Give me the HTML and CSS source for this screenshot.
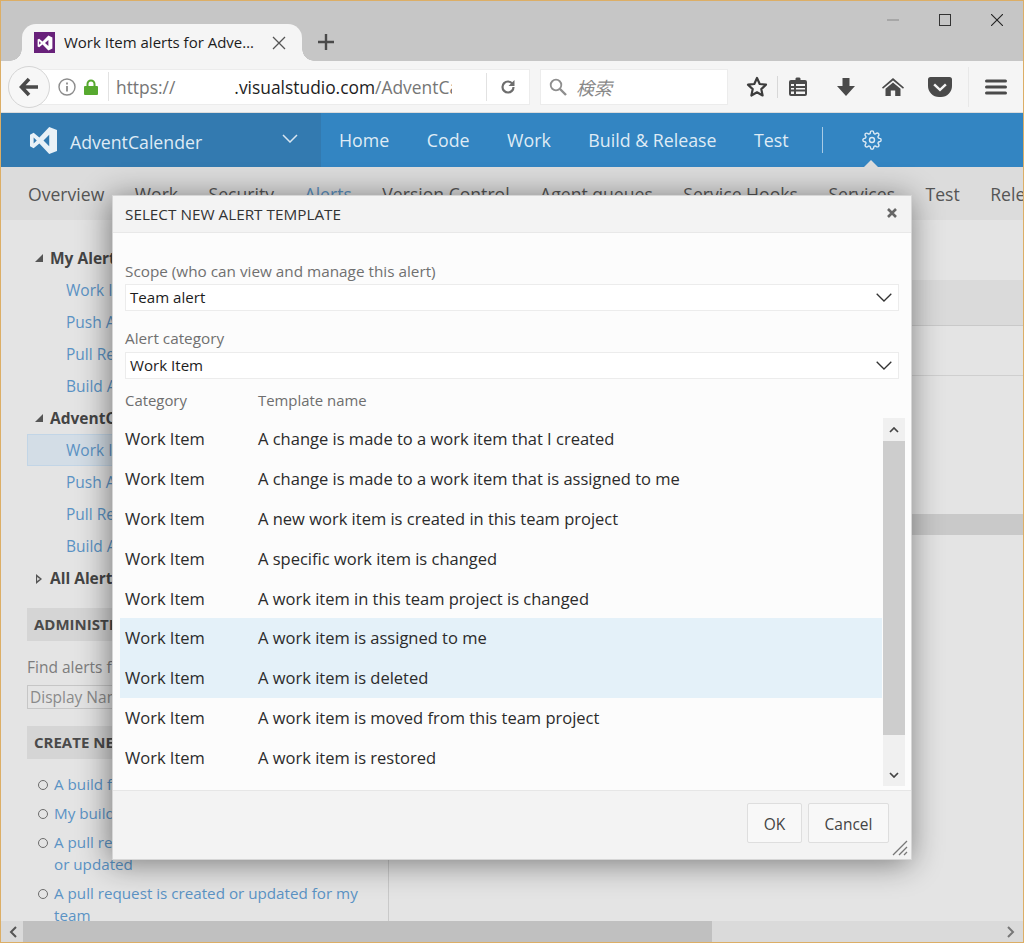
FILE: index.html
```html
<!DOCTYPE html>
<html lang="en">
<head>
<meta charset="utf-8">
<title>Work Item alerts</title>
<link rel="stylesheet" href="styles.css">
</head>
<body>
<div class="window">
  <div class="titlebar">
    <div class="tab">
      <span class="favicon"><svg viewBox="0 0 26 26" width="16" height="16"><path fill="#fff" fill-rule="evenodd" d="M18.5 1 25 4v18l-6.500 3L9 15.500 3.500 20 1 18.500v-11L3.500 6 9 10.500zM18.500 8 13 13l5.500 5zM3.500 10v6l3-3z"/></svg></span>
      <span class="tab-title">Work Item alerts for Adve…</span>
      <svg class="tab-close" viewBox="0 0 14 14" width="14" height="14"><path d="M1 1l12 12M13 1 1 13" stroke="#555" stroke-width="1.300" fill="none"/></svg>
    </div>
    <svg class="new-tab" viewBox="0 0 16 16" width="16" height="16"><path d="M8 0v16M0 8h16" stroke="#4a4a4a" stroke-width="2.400"/></svg>
    <div class="win-controls">
      <svg viewBox="0 0 12 12" width="12" height="12"><path d="M0 6h12" stroke="#888" stroke-width="1"/></svg>
      <svg viewBox="0 0 12 12" width="12" height="12"><rect x=".5" y=".5" width="11" height="11" fill="none" stroke="#333" stroke-width="1"/></svg>
      <svg viewBox="0 0 12 12" width="12" height="12"><path d="M0 0l12 12M12 0 0 12" stroke="#222" stroke-width="1.100"/></svg>
    </div>
  </div>

  <div class="toolbar">
    <div class="urlbar">
      <span class="back"><svg viewBox="0 0 20 20" width="20" height="20"><path d="M10 2 2.500 10l7.500 8M3 10h16" stroke="#4a4a4a" stroke-width="3.600" fill="none"/></svg></span>
      <svg class="info" viewBox="0 0 18 18" width="18" height="18"><circle cx="9" cy="9" r="8" fill="none" stroke="#8c8c8c" stroke-width="1.400"/><path d="M9 8v5.500M9 4.500v2" stroke="#8c8c8c" stroke-width="1.800"/></svg>
      <svg class="lock" viewBox="0 0 14 16" width="14" height="16"><path fill="#57a92f" d="M1 7h12a1 1 0 0 1 1 1v7a1 1 0 0 1-1 1H1a1 1 0 0 1-1-1V8a1 1 0 0 1 1-1z"/><path d="M3.500 7.500V5a3.500 3.500 0 0 1 7 0v2.500" fill="none" stroke="#57a92f" stroke-width="2"/></svg>
      <span class="url"><span class="url-dim">https://</span><span class="url-gap"></span><span class="url-host">.visualstudio.com</span><span class="url-dim">/AdventCalender</span></span>
      <span class="reload"><svg viewBox="0 0 16 16" width="16" height="16"><path d="M13.500 8A5.500 5.500 0 1 1 8 2.500c2 0 3.500 1 4.500 2.500" fill="none" stroke="#6d6d6d" stroke-width="2.200"/><path d="M14.500 1v6h-6z" fill="#6d6d6d"/></svg></span>
    </div>
    <div class="search">
      <svg viewBox="0 0 18 18" width="18" height="18"><circle cx="7" cy="7" r="5.300" fill="none" stroke="#8e8e8e" stroke-width="1.800"/><path d="M11 11l6 6" stroke="#8e8e8e" stroke-width="2.400"/></svg>
      <span class="search-text">検索</span>
    </div>
    <svg class="ti star" viewBox="0 0 22 22" width="22" height="22"><path d="M11 2l2.700 6 6.300.7-4.700 4.400 1.300 6.400L11 16.300l-5.600 3.200 1.300-6.400L2 8.700 8.300 8z" fill="none" stroke="#3c3c3c" stroke-width="2.200" stroke-linejoin="round"/></svg>
    <span class="tsep star-sep"></span>
    <svg class="ti reader" viewBox="0 0 20 20" width="20" height="20"><path fill="#4a4a4a" fill-rule="evenodd" d="M3 3h4.500V1.500A1.500 1.500 0 0 1 9 .5h2a1.500 1.500 0 0 1 1.500 1V3H17a2 2 0 0 1 2 2v12a2 2 0 0 1-2 2H3a2 2 0 0 1-2-2V5a2 2 0 0 1 2-2zM3 7v2h3V7zm5 0v2h9V7zM3 11v1.500h3V11zm5 0v1.500h9V11zM3 14.500V17h3v-2.500zm5 0V17h9v-2.500z"/></svg>
    <svg class="ti down" viewBox="0 0 20 20" width="20" height="20"><path fill="#4a4a4a" d="M6.500 1h7v8H19l-9 10L1 9h5.500z"/></svg>
    <svg class="ti home" viewBox="0 0 22 20" width="22" height="20"><path fill="#4a4a4a" d="M11 1 0 10.500l1 1.300L11 3.500l10 8.300 1-1.300zM11 5.500 3.500 11.800V19h5.300v-5.500h4.400V19h5.300v-7.200z"/></svg>
    <svg class="ti pocket" viewBox="0 0 24 20" width="24" height="20"><path fill="#4a4a4a" fill-rule="evenodd" d="M2.500 0h19A2.500 2.500 0 0 1 24 2.500V9a11 11 0 0 1-11 11h-2A11 11 0 0 1 0 9V2.500A2.500 2.500 0 0 1 2.500 0zm4.500 6.500L5.300 8.300 12 14.500l6.700-6.200L17 6.500l-5 4.700z"/></svg>
    <span class="tsep menu-sep"></span>
    <svg class="ti menu" viewBox="0 0 22 16" width="22" height="16"><path d="M1.500 2h19M1.500 8h19M1.500 14h19" stroke="#4a4a4a" stroke-width="3" stroke-linecap="round"/></svg>
  </div>

  <div class="appbar">
    <div class="project">
      <svg viewBox="0 0 26 26" width="27" height="27"><path fill="#e9f1f7" fill-rule="evenodd" d="M18.500 0 26 3v20l-7.500 3L9 16 3.500 20.500 0 18.500v-11L3.500 5.500 9 10zM18.500 7.500 13 13l5.500 5.500zM3.500 10v6L6.500 13z"/></svg>
      <span class="project-name">AdventCalender</span>
      <svg class="project-caret" viewBox="0 0 16 9" width="16" height="9"><path d="M1 1l7 7 7-7" fill="none" stroke="#d8e6f1" stroke-width="1.500"/></svg>
    </div>
    <nav class="mainnav">
      <a>Home</a><a>Code</a><a>Work</a><a>Build &amp; Release</a><a>Test</a>
      <span class="nav-sep"></span>
      <svg class="gear" viewBox="0 0 24 24" width="20" height="20" fill="none" stroke="#dbe9f4" stroke-width="1.700"><path d="M12 15a3 3 0 1 0 0-6 3 3 0 0 0 0 6z"/><path d="M19.400 15a1.650 1.650 0 0 0 .33 1.820l.06.06a2 2 0 0 1 0 2.830 2 2 0 0 1-2.830 0l-.06-.06a1.650 1.650 0 0 0-1.820-.33 1.650 1.650 0 0 0-1 1.510V21a2 2 0 0 1-2 2 2 2 0 0 1-2-2v-.09A1.650 1.650 0 0 0 9 19.400a1.650 1.650 0 0 0-1.820.33l-.06.06a2 2 0 0 1-2.830 0 2 2 0 0 1 0-2.830l.06-.06a1.650 1.650 0 0 0 .33-1.820 1.650 1.650 0 0 0-1.510-1H3a2 2 0 0 1-2-2 2 2 0 0 1 2-2h.09A1.650 1.650 0 0 0 4.600 9a1.650 1.650 0 0 0-.33-1.820l-.06-.06a2 2 0 0 1 0-2.830 2 2 0 0 1 2.830 0l.06.06a1.650 1.650 0 0 0 1.820.33H9a1.650 1.650 0 0 0 1-1.510V3a2 2 0 0 1 2-2 2 2 0 0 1 2 2v.09a1.650 1.650 0 0 0 1 1.510 1.650 1.650 0 0 0 1.820-.33l.06-.06a2 2 0 0 1 2.830 0 2 2 0 0 1 0 2.830l-.06.06a1.650 1.650 0 0 0-.33 1.820V9a1.650 1.650 0 0 0 1.510 1H21a2 2 0 0 1 2 2 2 2 0 0 1-2 2h-.09a1.650 1.650 0 0 0-1.510 1z"/></svg>
    </nav>
  </div>

  <div class="subnav">
    <a>Overview</a><a>Work</a><a>Security</a><a class="active">Alerts</a><a>Version Control</a><a>Agent queues</a><a>Service Hooks</a><a>Services</a><a>Test</a><a>Release</a>
  </div>

  <div class="content">
    <aside class="sidebar">
      <div class="tree-head open">My Alerts</div>
      <a class="tree-item">Work Item Alerts</a>
      <a class="tree-item">Push Alerts</a>
      <a class="tree-item">Pull Request Alerts</a>
      <a class="tree-item">Build Alerts</a>
      <div class="tree-head open">AdventCalender Team Alerts</div>
      <a class="tree-item selected">Work Item Alerts</a>
      <a class="tree-item">Push Alerts</a>
      <a class="tree-item">Pull Request Alerts</a>
      <a class="tree-item">Build Alerts</a>
      <div class="tree-head closed">All Alerts</div>
      <div class="band admin">ADMINISTER</div>
      <div class="find-label">Find alerts for a user or group</div>
      <div class="find-input">Display Name</div>
      <div class="band create">CREATE NEW ALERT</div>
      <ul class="alert-links">
        <li><a>A build fails</a></li>
        <li><a>My build completes</a></li>
        <li><a>A pull request is reviewed, created<br>or updated</a></li>
        <li><a>A pull request is created or updated for my team</a></li>
      </ul>
    </aside>
    <main class="main">
      <div class="main-band"></div>
      <div class="main-row"></div>
      <div class="main-dark"></div>
    </main>
  </div>

  <div class="hscroll">
    <svg viewBox="0 0 8 12" width="8" height="12"><path d="M7 1 2 6l5 5" fill="none" stroke="#555" stroke-width="2"/></svg>
    <span class="hthumb"></span>
    <svg viewBox="0 0 8 12" width="8" height="12"><path d="M1 1l5 5-5 5" fill="none" stroke="#777" stroke-width="2"/></svg>
  </div>

  <section class="dialog">
    <header class="dlg-head">
      <span>SELECT NEW ALERT TEMPLATE</span>
      <svg viewBox="0 0 10 10" width="10" height="10"><path d="M1 1l8 8M9 1 1 9" stroke="#666" stroke-width="2.600"/></svg>
    </header>
    <div class="dlg-body">
      <div class="field-label first">Scope (who can view and manage this alert)</div>
      <div class="select"><span>Team alert</span><svg viewBox="0 0 16 9" width="16" height="9"><path d="M.7.7 8 8 15.300.7" fill="none" stroke="#333" stroke-width="1.300"/></svg></div>
      <div class="field-label second">Alert category</div>
      <div class="select"><span>Work Item</span><svg viewBox="0 0 16 9" width="16" height="9"><path d="M.7.7 8 8 15.300.7" fill="none" stroke="#333" stroke-width="1.300"/></svg></div>
      <div class="col-head"><span class="c1">Category</span><span>Template name</span></div>
      <div class="list-wrap">
        <div class="rows">
          <div class="row"><span class="c1">Work Item</span><span>A change is made to a work item that I created</span></div>
          <div class="row"><span class="c1">Work Item</span><span>A change is made to a work item that is assigned to me</span></div>
          <div class="row"><span class="c1">Work Item</span><span>A new work item is created in this team project</span></div>
          <div class="row"><span class="c1">Work Item</span><span>A specific work item is changed</span></div>
          <div class="row"><span class="c1">Work Item</span><span>A work item in this team project is changed</span></div>
          <div class="row sel"><span class="c1">Work Item</span><span>A work item is assigned to me</span></div>
          <div class="row sel"><span class="c1">Work Item</span><span>A work item is deleted</span></div>
          <div class="row"><span class="c1">Work Item</span><span>A work item is moved from this team project</span></div>
          <div class="row"><span class="c1">Work Item</span><span>A work item is restored</span></div>
        </div>
        <div class="vscroll">
          <span class="vbtn"><svg viewBox="0 0 10 6" width="10" height="6"><path d="M1 5l4-4 4 4" fill="none" stroke="#444" stroke-width="1.700"/></svg></span>
          <span class="vthumb"></span>
          <span class="vbtn bottom"><svg viewBox="0 0 10 6" width="10" height="6"><path d="M1 1l4 4 4-4" fill="none" stroke="#444" stroke-width="1.700"/></svg></span>
        </div>
      </div>
    </div>
    <footer class="dlg-foot">
      <button class="btn ok">OK</button>
      <button class="btn cancel">Cancel</button>
      <svg class="grip" viewBox="0 0 16 16" width="16" height="16"><path d="M1 15 15 1M7 15l8-8M12 15l3-3" stroke="#777" stroke-width="1.300"/></svg>
    </footer>
  </section>
</div>
</body>
</html>
```

FILE: styles.css
```css
* { box-sizing: border-box; }
html, body { margin: 0; padding: 0; }
body { font-family: "Open Sans", "Noto Sans", sans-serif; background: #e4e4e4; }
a { text-decoration: none; }

.window {
  position: relative;
  width: 1024px;
  height: 943px;
  border: 1px solid #dcae66;
  display: flex;
  flex-direction: column;
  overflow: hidden;
  background: #e4e4e4;
}

/* Browser title bar */
.titlebar {
  height: 60px;
  flex: none;
  background: #c6c6c6;
  display: flex;
  align-items: flex-end;
  padding-left: 21px;
}
.tab {
  position: relative;
  width: 280px;
  height: 37px;
  background: #f5f5f5;
  border-radius: 14px 14px 0 0;
  display: flex;
  align-items: center;
  padding: 0 0 0 12px;
}
.tab::before, .tab::after {
  content: "";
  position: absolute;
  bottom: 0;
  width: 12px;
  height: 12px;
}
.tab::before { left: -12px; background: radial-gradient(circle at 0 0, transparent 11.500px, #f5f5f5 12px); }
.tab::after { right: -12px; background: radial-gradient(circle at 100% 0, transparent 11.500px, #f5f5f5 12px); }
.favicon {
  width: 21px;
  height: 21px;
  background: #68217a;
  display: flex;
  align-items: center;
  justify-content: center;
  flex: none;
}
.tab-title {
  margin: 0 0 2px 9px;
  font-size: 15px;
  color: #1c1c1c;
  white-space: nowrap;
  width: 194px;
  overflow: hidden;
}
.tab-close { margin-left: 14px; flex: none; }
.new-tab { margin: 0 0 11px 16px; flex: none; }
.win-controls {
  margin-left: auto;
  align-self: flex-start;
  display: flex;
  gap: 40px;
  padding: 13px 20px 0 0;
}

/* Browser toolbar */
.toolbar {
  height: 52px;
  flex: none;
  background: #f5f5f5;
  border-bottom: 1px solid #dcdcdc;
  display: flex;
  align-items: center;
  padding-left: 7px;
}
.urlbar {
  position: relative;
  width: 522px;
  height: 36px;
  background: #fff;
  display: flex;
  align-items: center;
  flex: none;
  border-radius: 18px 0 0 18px;
  box-shadow: inset 0 0 0 1px #ececec;
}
.back {
  width: 42px;
  height: 42px;
  flex: none;
  border-radius: 50%;
  background: #f7f7f7;
  border: 1px solid #d5d5d5;
  display: flex;
  align-items: center;
  justify-content: center;
  margin-right: 8px;
}
.info { flex: none; }
.lock { flex: none; margin-left: 8px; }
.url {
  flex: none;
  width: 344px;
  margin-left: 10px;
  padding: 1px 0 0 7px;
  border-left: 1px solid #e2e2e2;
  font-size: 17.400px;
  line-height: 28px;
  white-space: nowrap;
  overflow: hidden;
  color: #1d1d1d;
}
.url-dim { color: #767676; }
.url-gap { display: inline-block; width: 59px; }
.reload {
  flex: none;
  margin-left: 34px;
  padding-left: 13px;
  height: 28px;
  border-left: 1px solid #e2e2e2;
  display: flex;
  align-items: center;
}
.search {
  width: 188px;
  height: 36px;
  margin-left: 10px;
  background: #fff;
  box-shadow: inset 0 0 0 1px #ececec;
  display: flex;
  align-items: center;
  padding-left: 9px;
  flex: none;
}
.search-text {
  margin-left: 9px;
  font: italic 18px "Noto Sans CJK JP", sans-serif;
  color: #888;
}
.ti { flex: none; }
.tsep { width: 1px; height: 22px; background: #d8d8d8; flex: none; }
.star { margin-left: 18px; }
.star-sep { margin-left: 9px; }
.reader { margin-left: 10px; }
.down { margin-left: 28px; }
.home { margin-left: 26px; }
.pocket { margin-left: 24px; }
.menu-sep { height: 40px; margin-left: 16px; background: #e8e8e8; }
.menu { margin-left: 16px; }

/* Application bar */
.appbar {
  height: 54px;
  flex: none;
  display: flex;
  background: #3385c2;
  color: #dfebf5;
}
.project {
  width: 320px;
  background: #337ab0;
  display: flex;
  align-items: center;
  padding-left: 29px;
  flex: none;
}
.project-name { margin: 4px 0 0 13px; font-size: 17.700px; }
.project-caret { margin-left: auto; margin-right: 23px; margin-bottom: 4px; }
.mainnav {
  position: relative;
  display: flex;
  align-items: center;
  padding-left: 18px;
  font-size: 17.800px;
  flex: 1;
}
.mainnav a { margin-right: 37.500px; }
.nav-sep { width: 1px; height: 26px; margin-left: -4px; background: #a8cbe5; }
.gear { margin-left: 39px; }
.mainnav::after {
  content: "";
  position: absolute;
  left: 543px;
  bottom: 0;
  border: 7px solid transparent;
  border-top: 0;
  border-bottom-color: #dcdcdc;
}

/* Sub navigation */
.subnav {
  height: 53px;
  flex: none;
  background: #dcdcdc;
  display: flex;
  align-items: center;
  padding-left: 27px;
  gap: 30.500px;
  font-size: 17.600px;
  color: #555;
  white-space: nowrap;
  overflow: hidden;
}
.subnav .active { color: #5a8fbd; }

/* Page behind the dialog */
.content {
  flex: 1;
  min-height: 0;
  display: flex;
  overflow: hidden;
  background: #e4e4e4;
}
.sidebar {
  width: 388px;
  flex: none;
  padding: 22px 0 0 26px;
  border-right: 1px solid #c9c9c9;
  font-size: 15.500px;
  overflow: hidden;
}
.tree-head {
  position: relative;
  height: 32px;
  line-height: 32px;
  padding-left: 23px;
  font-weight: 700;
  color: #444;
  white-space: nowrap;
}
.tree-head::before {
  content: "";
  position: absolute;
  left: 8px;
  top: 12px;
}
.tree-head.open::before {
  border-left: 8px solid transparent;
  border-bottom: 8px solid #555;
}
.tree-head.closed::before {
  top: 12px;
  left: 9px;
  border-top: 5px solid transparent;
  border-bottom: 5px solid transparent;
  border-left: 6px solid #555;
}
.tree-head.closed::after {
  content: "";
  position: absolute;
  top: 15px;
  left: 10px;
  border-top: 2.500px solid transparent;
  border-bottom: 2.500px solid transparent;
  border-left: 3px solid #d6d6d6;
}
.tree-item {
  display: block;
  height: 32px;
  line-height: 32px;
  padding-left: 39px;
  color: #5b93c4;
  white-space: nowrap;
}
.tree-item.selected {
  background: #d3dde6;
  box-shadow: inset 0 0 0 1px #c2d5e6;
}
.band {
  height: 33px;
  line-height: 33px;
  padding-left: 7px;
  background: #d5d5d5;
  color: #4a4a4a;
  font-weight: 700;
  font-size: 15px;
  white-space: nowrap;
}
.admin { margin-top: 14px; }
.find-label { margin-top: 14px; color: #7d7d7d; white-space: nowrap; line-height: 24px; }
.find-input {
  margin-top: 6px;
  height: 24px;
  line-height: 22px;
  width: 300px;
  border: 1px solid #c6c6c6;
  padding-left: 2px;
  color: #8a8a8a;
  white-space: nowrap;
}
.create { margin-top: 17px; }
.alert-links {
  list-style: none;
  margin: 14px 0 0;
  padding: 0 0 0 27px;
  width: 340px;
  font-size: 15.200px;
}
.alert-links li { position: relative; margin-bottom: 7px; line-height: 22px; }
.alert-links li::before {
  content: "";
  position: absolute;
  left: -16px;
  top: 7px;
  width: 8px;
  height: 8px;
  border: 1.500px solid #6c6c6c;
  border-radius: 50%;
}
.alert-links a { color: #5b93c4; }
.main { flex: 1; padding-top: 60px; }
.main-band { height: 46px; background: #dadada; border-bottom: 1px solid #c9c9c9; }
.main-row { height: 50px; border-bottom: 1px solid #cfcfcf; }
.main-dark { height: 21px; margin-top: 138px; background: #c9c9c9; }

/* Page scrollbar */
.hscroll {
  height: 21px;
  flex: none;
  background: #dadada;
  display: flex;
  align-items: center;
  padding: 0 8px;
}
.hthumb { width: 689px; height: 21px; margin: 0 auto 0 6px; background: #c0c0c0; }

/* Dialog */
.dialog {
  position: absolute;
  left: 111px;
  top: 194px;
  width: 800px;
  height: 665px;
  display: flex;
  flex-direction: column;
  background: #fcfcfc;
  border: 1px solid #d6d6d6;
  box-shadow: -2px 3px 30px rgba(0, 0, 0, .48);
}
.dlg-head {
  height: 37px;
  flex: none;
  background: #f3f3f3;
  border-bottom: 1px solid #e8e8e8;
  display: flex;
  align-items: center;
  justify-content: space-between;
  padding: 0 14px 0 12px;
  font-size: 15.300px;
  color: #333;
}
.dlg-head svg { margin-bottom: 2px; }
.dlg-body { flex: 1; min-height: 0; padding: 0 6px 0 12px; font-size: 16.500px; }
.field-label { color: #707070; height: 22px; line-height: 22px; font-size: 15.300px; }
.first { margin-top: 27px; }
.second { margin-top: 16px; }
.select {
  height: 27px;
  margin-top: 2px;
  margin-right: 6px;
  background: #fff;
  border: 1px solid #ececec;
  display: flex;
  align-items: center;
  justify-content: space-between;
  padding: 0 6px 0 4px;
  color: #1c1c1c;
  font-size: 15.100px;
}
.select span { margin-bottom: 2px; }
.field-label.second + .select { margin-top: 3px; }
.col-head {
  display: flex;
  margin-top: 10px;
  height: 23px;
  line-height: 22px;
  color: #6e6e6e;
  font-size: 14.900px;
}
.c1 { width: 133px; flex: none; }
.list-wrap { display: flex; margin-top: 6px; height: 368px; }
.rows { width: 762px; margin-left: -5px; padding-top: 1px; flex: none; }
.row {
  display: flex;
  height: 40px;
  align-items: center;
  padding: 0 0 2px 5px;
  color: #2b2b2b;
}
.row.sel { background: #e4f1f9; }
.row:nth-child(n+6) { position: relative; top: -1px; }
.vscroll {
  width: 22px;
  margin-left: 1px;
  flex: none;
  background: #f0f0f0;
  display: flex;
  flex-direction: column;
  align-items: stretch;
}
.vbtn { height: 23px; display: flex; align-items: center; justify-content: center; }
.vbtn.bottom { margin-top: auto; }
.vthumb { height: 294px; background: #cdcdcd; }
.dlg-foot {
  position: relative;
  height: 69px;
  flex: none;
  background: #f3f3f3;
  border-top: 1px solid #e6e6e6;
  display: flex;
  justify-content: flex-end;
  align-items: flex-start;
  gap: 6px;
  padding: 12px 22px 0 0;
}
.btn {
  height: 40px;
  padding-top: 2px;
  font: 15.500px "Open Sans", "Noto Sans", sans-serif;
  color: #444;
  background: #f8f8f8;
  border: 1px solid #dedede;
  border-radius: 2px;
}
.ok { width: 55px; }
.cancel { width: 81px; }
.grip { position: absolute; right: 3px; bottom: 3px; }
```
